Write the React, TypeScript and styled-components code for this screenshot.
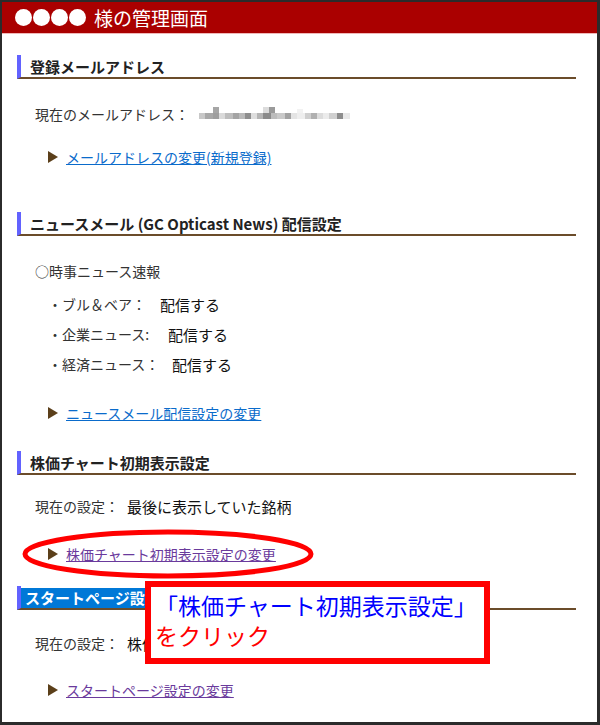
import styled, { createGlobalStyle } from "styled-components";

const GlobalStyle = createGlobalStyle`
  html, body {
    margin: 0;
    padding: 0;
    background: #ffffff;
  }
  body {
    font-family: "Noto Sans CJK JP", "Noto Sans", sans-serif;
  }
`;

const Frame = styled.div`
  position: relative;
  width: 600px;
  height: 725px;
  box-sizing: border-box;
  border: 2px solid #2b2b2b;
  border-right-width: 3px;
  border-bottom-width: 3px;
  background: #fff;
  overflow: hidden;
`;

const Header = styled.div`
  display: flex;
  align-items: center;
  gap: 8px;
  height: 31px;
  padding-left: 13px;
  background: #aa0000;
  border-bottom: 1px solid #f0b8b8;
  color: #fff;
  font-size: 19px;
  line-height: 31px;
`;

const Dots = styled.span`
  display: flex;
  gap: 1px;
`;

const Dot = styled.span`
  width: 17px;
  height: 17px;
  border-radius: 50%;
  background: #fff;
`;

const Content = styled.div`
  padding: 21px 21px 0 15px;
`;

const Section = styled.section<{ $gap: number }>`
  margin-bottom: ${(p) => p.$gap}px;
`;

const Heading = styled.h2`
  display: flex;
  align-items: center;
  margin: 0;
  height: 22px;
  border-left: 4px solid #6262ff;
  border-bottom: 2px solid #6b4c2a;
  font-size: 15px;
  font-weight: bold;
  color: #222;
  line-height: 22px;
`;

const HeadingText = styled.span<{ $selected?: boolean }>`
  padding-left: ${(p) => (p.$selected ? "4px" : "9px")};
  padding-right: 4px;
  background: ${(p) => (p.$selected ? "#0078d7" : "transparent")};
  color: ${(p) => (p.$selected ? "#fff" : "#222")};
  height: 20px;
  line-height: 20px;
  margin-top: 2px;
  white-space: nowrap;
`;

const Row = styled.div<{ $top: number; $indent?: number; $height?: number }>`
  display: flex;
  align-items: center;
  margin-top: ${(p) => p.$top}px;
  padding-left: ${(p) => p.$indent ?? 18}px;
  height: ${(p) => p.$height ?? 20}px;
  font-size: 14px;
  color: #333;
  white-space: nowrap;
`;

const Label = styled.span<{ $width?: number }>`
  display: inline-block;
  min-width: ${(p) => p.$width ?? 0}px;
`;

const Value = styled.span`
  font-size: 15px;
  color: #111;
`;

const LinkRow = styled.div<{ $top: number }>`
  display: flex;
  align-items: center;
  gap: 8px;
  margin-top: ${(p) => p.$top}px;
  padding-left: 31px;
  height: 20px;
  font-size: 14px;
  white-space: nowrap;
`;

const Arrow = styled.span`
  width: 0;
  height: 0;
  border-top: 6px solid transparent;
  border-bottom: 6px solid transparent;
  border-left: 10px solid #5b3f1a;
`;

const Link = styled.a<{ $visited?: boolean }>`
  color: ${(p) => (p.$visited ? "#6a3a9c" : "#0a6bcb")};
  text-decoration: underline;
  cursor: pointer;
`;

const Ellipse = styled.svg`
  position: absolute;
  left: 20px;
  top: 527px;
  pointer-events: none;
`;

const Callout = styled.div`
  position: absolute;
  left: 143px;
  top: 579px;
  width: 345px;
  height: 83px;
  box-sizing: border-box;
  border: 6px solid #ff0000;
  background: #fff;
  padding: 3px 0 0 4px;
  font-size: 23px;
  line-height: 30px;
  white-space: nowrap;
`;

const CalloutLine = styled.div<{ $color: string }>`
  color: ${(p) => p.$color};
`;

const mosaic = [
  [0, 6, "#c8c8c8"], [6, 8, "#a8a8a8"], [14, 6, "#9e9e9e"], [20, 6, "#dadada"],
  [26, 8, "#bdbdbd"], [34, 6, "#a4a4a4"], [40, 6, "#b9b9b9"], [46, 6, "#8e8e8e"],
  [52, 6, "#dedede"], [58, 6, "#b5b5b5"], [64, 8, "#8b8b8b"], [72, 6, "#bcbcbc"],
  [78, 8, "#c9c9c9"], [86, 6, "#a2a2a2"], [92, 6, "#e4e4e4"], [98, 8, "#eeeeee"],
  [106, 6, "#cfcfcf"], [112, 6, "#b0b0b0"], [118, 6, "#dcdcdc"], [124, 6, "#ebebeb"],
  [130, 8, "#d0d0d0"], [138, 6, "#8d8d8d"], [144, 7, "#e8e8e8"],
] as const;

function BlurredEmail() {
  return (
    <svg width="152" height="14" viewBox="0 0 152 14" style={{ marginLeft: 10 }}>
      <rect x="14" y="0" width="6" height="6" fill="#a6a6a6" />
      <rect x="64" y="0" width="6" height="6" fill="#dcdcdc" />
      <rect x="70" y="0" width="6" height="6" fill="#9a9a9a" />
      <rect x="98" y="2" width="6" height="4" fill="#f2f2f2" />
      {mosaic.map(([x, w, c]) => (
        <rect key={x} x={x} y={6} width={w} height={6} fill={c} />
      ))}
    </svg>
  );
}

export default function App() {
  return (
    <>
      <GlobalStyle />
      <Frame>
        <Header>
          <Dots>
            <Dot />
            <Dot />
            <Dot />
            <Dot />
          </Dots>
          <span>様の管理画面</span>
        </Header>
        <Content>
          <Section $gap={45}>
            <Heading>
              <HeadingText>登録メールアドレス</HeadingText>
            </Heading>
            <Row $top={25}>
              <Label>現在のメールアドレス：</Label>
              <BlurredEmail />
            </Row>
            <LinkRow $top={23}>
              <Arrow />
              <Link>メールアドレスの変更(新規登録)</Link>
            </LinkRow>
          </Section>

          <Section $gap={28}>
            <Heading>
              <HeadingText>ニュースメール (GC Opticast News) 配信設定</HeadingText>
            </Heading>
            <Row $top={25}>○時事ニュース速報</Row>
            <Row $top={8} $indent={31} $height={30}>
              <Label $width={112}>・ブル＆ベア：</Label>
              <Value>配信する</Value>
            </Row>
            <Row $top={0} $indent={31} $height={30}>
              <Label $width={120}>・企業ニュース:</Label>
              <Value>配信する</Value>
            </Row>
            <Row $top={0} $indent={31} $height={30}>
              <Label $width={124}>・経済ニュース：</Label>
              <Value>配信する</Value>
            </Row>
            <LinkRow $top={24}>
              <Arrow />
              <Link>ニュースメール配信設定の変更</Link>
            </LinkRow>
          </Section>

          <Section $gap={22}>
            <Heading>
              <HeadingText>株価チャート初期表示設定</HeadingText>
            </Heading>
            <Row $top={21}>
              <Label $width={92}>現在の設定：</Label>
              <Value>最後に表示していた銘柄</Value>
            </Row>
            <LinkRow $top={28}>
              <Arrow />
              <Link $visited>株価チャート初期表示設定の変更</Link>
            </LinkRow>
          </Section>

          <Section $gap={0}>
            <Heading>
              <HeadingText $selected>スタートページ設定</HeadingText>
            </Heading>
            <Row $top={23}>
              <Label $width={92}>現在の設定：</Label>
              <Value>株価チャート</Value>
            </Row>
            <LinkRow $top={27}>
              <Arrow />
              <Link $visited>スタートページ設定の変更</Link>
            </LinkRow>
          </Section>
        </Content>

        <Ellipse width="292" height="50" viewBox="0 0 292 50">
          <ellipse cx="146" cy="25" rx="143" ry="22" fill="none" stroke="#ff0000" strokeWidth="5" />
        </Ellipse>

        <Callout>
          <CalloutLine $color="#0000ff">「株価チャート初期表示設定」</CalloutLine>
          <CalloutLine $color="#ff0000">をクリック</CalloutLine>
        </Callout>
      </Frame>
    </>
  );
}
